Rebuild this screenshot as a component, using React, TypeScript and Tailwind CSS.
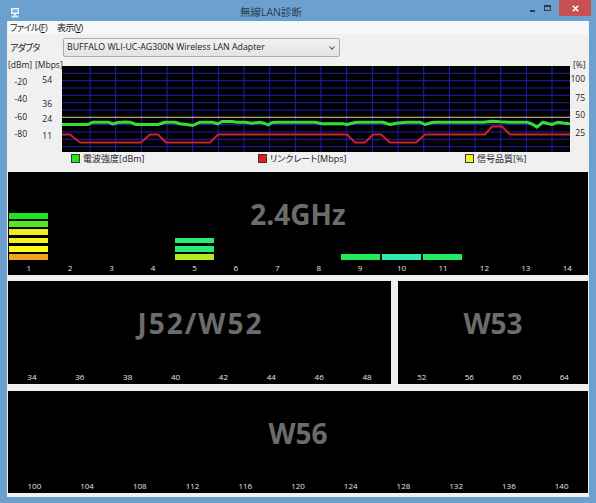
import React from 'react'

const UI = "font-['Open_Sans','Noto_Sans_CJK_JP',sans-serif] [font-feature-settings:'palt']"

// link rate trace, window coords -> chart coords (chart origin 62,66)
const RATE: [number, number][] = [
  [62, 134], [70, 134], [80, 142], [141, 142], [150, 134], [158, 134], [166, 142], [210, 142],
  [218, 134], [347, 134], [355, 142], [365, 142], [373, 134], [381, 134], [390, 142], [416, 142],
  [425, 134], [485, 134], [492, 126], [502, 126], [510, 134], [570, 134],
]

const SIGNAL: [number, number][] = [
  [62, 124], [88, 124], [93, 121.7], [108, 121.7], [113, 123.5], [118, 122], [125, 121.5], [130, 121.7],
  [136, 124], [158, 124], [165, 121.7], [175, 121.7], [180, 123.3], [190, 124.5], [193, 125], [200, 121.7],
  [212, 121.7], [218, 123.3], [222, 121], [232, 121], [237, 121.7], [245, 121.7], [252, 122.7], [260, 121.7],
  [265, 123], [268, 124.5], [272, 122], [278, 121.7], [315, 121.7], [322, 123.3], [343, 123.3], [347, 124],
  [355, 122], [360, 121.7], [383, 121.7], [390, 124], [398, 122.5], [407, 121.7], [420, 121.7], [425, 124],
  [432, 122], [437, 121.7], [483, 121.7], [492, 120.7], [500, 121.3], [510, 121.7], [527, 121.7], [533, 124],
  [537, 126.7], [543, 121.7], [548, 123], [552, 124], [558, 121.7], [563, 122.5], [570, 123.3],
]

const toPoints = (pts: [number, number][]) => pts.map(([x, y]) => `${x - 62},${y - 65.5}`).join(' ')

function TitleBar() {
  return (
    <div className="h-[21px] flex items-start relative">
      <svg width="8" height="10" viewBox="0 0 8 10" className="ml-[11px] mt-[8px]">
        <rect x="0.5" y="0.5" width="7" height="5" fill="#cfe4f7" stroke="#eef6fd" />
        <rect x="1.5" y="1.5" width="5" height="3" fill="#7fb2de" />
        <rect x="3" y="6" width="2" height="1.5" fill="#eef6fd" />
        <rect x="0.5" y="7.5" width="7" height="2" fill="#dceaf6" />
      </svg>
      <div className={`flex-1 text-center text-[10.5px] leading-none pt-[7px] text-[#2c3e50] ${UI}`}>無線LAN診断</div>
      <div className="flex items-start h-[16px] mr-[5px]">
        <div className="w-[18px] h-[16px] flex items-start justify-center pt-[10px]">
          <div className="w-[5px] h-[2px] bg-[#2a3b4c]" />
        </div>
        <div className="w-[12px] h-[16px] flex items-start justify-center pt-[5px]">
          <div className="w-[7px] h-[6px] border border-[#2a3b4c] border-t-2" />
        </div>
        <div className="w-[32px] h-[16px] ml-[6px] bg-[#c75050] flex items-center justify-center">
          <svg width="7" height="7" viewBox="0 0 7 7">
            <path d="M0.8 0.8 L6.2 6.2 M6.2 0.8 L0.8 6.2" stroke="#fff" strokeWidth="1.6" />
          </svg>
        </div>
      </div>
    </div>
  )
}

function MenuBar() {
  return (
    <div className={`h-[13px] bg-[#f6f7f8] flex items-center gap-[10px] pl-[2px] text-[9px] tracking-[-0.6px] leading-none text-[#1a1a1a] ${UI}`}>
      <span>ファイル(<span className="underline">F</span>)</span>
      <span>表示(<span className="underline">V</span>)</span>
    </div>
  )
}

function AdapterRow() {
  return (
    <div className={`h-[23px] flex items-start pt-[4px] leading-none text-[#1a1a1a] ${UI}`}>
      <div className="w-[55px] pl-[2px] pt-[5px] text-[9px] tracking-[-0.8px]">アダプタ</div>
      <div className="w-[277px] h-[19px] border border-[#adadad] rounded-[2px] bg-gradient-to-b from-[#f2f2f2] to-[#e3e3e3] flex items-center pl-[3px] pr-[4px]">
        <span className="flex-1 text-[8.8px]">BUFFALO WLI-UC-AG300N Wireless LAN Adapter</span>
        <svg width="6" height="4" viewBox="0 0 6 4">
          <path d="M0.5 0.5 L3 3.2 L5.5 0.5" fill="none" stroke="#555" strokeWidth="1.1" />
        </svg>
      </div>
    </div>
  )
}

function Chart() {
  const vx = Array.from({ length: 19 }, (_, i) => 28 + i * 25.67)
  const hy = Array.from({ length: 11 }, (_, i) => 7.33 * (i + 1))
  return (
    <svg width="508" height="86" viewBox="0 0 508 86" className="block bg-black">
      {vx.map((x) => (
        <line key={`v${x}`} x1={x} y1={0} x2={x} y2={86} stroke="#1f1fb4" strokeWidth="1" />
      ))}
      {hy.map((y, i) => (
        <line key={`h${y}`} x1={0} y1={y} x2={508} y2={y} stroke={i === 6 ? '#d9cba8' : '#1f1fb4'} strokeWidth="1" />
      ))}
      <polyline points={toPoints(RATE)} fill="none" stroke="#d02020" strokeWidth="2" />
      <polyline points={toPoints(SIGNAL)} fill="none" stroke="#35dc35" strokeWidth="3" strokeLinejoin="round" />
    </svg>
  )
}

function ChartSection() {
  const axis = "absolute text-[8.5px] leading-none text-[#1a1a1a] font-['Open_Sans',sans-serif]"
  return (
    <div className="h-[95px] flex">
      <div className="w-[54px] relative">
        <span className={`${axis} left-[0px] top-[4px]`}>[dBm]</span>
        <span className={`${axis} left-[27px] top-[4px]`}>[Mbps]</span>
        <span className={`${axis} right-[35px] top-[20.5px]`}>-20</span>
        <span className={`${axis} right-[35px] top-[38px]`}>-40</span>
        <span className={`${axis} right-[35px] top-[55.5px]`}>-60</span>
        <span className={`${axis} right-[35px] top-[73px]`}>-80</span>
        <span className={`${axis} right-[10px] top-[19px]`}>54</span>
        <span className={`${axis} right-[10px] top-[43px]`}>36</span>
        <span className={`${axis} right-[10px] top-[58px]`}>24</span>
        <span className={`${axis} right-[10px] top-[75px]`}>11</span>
      </div>
      <div className="pt-[9px]">
        <Chart />
      </div>
      <div className="flex-1 relative">
        <span className={`${axis} left-[3px] top-[3.5px]`}>[%]</span>
        <span className={`${axis} right-[3px] top-[18px]`}>100</span>
        <span className={`${axis} right-[3px] top-[36.5px]`}>75</span>
        <span className={`${axis} right-[3px] top-[54px]`}>50</span>
        <span className={`${axis} right-[3px] top-[72px]`}>25</span>
      </div>
    </div>
  )
}

function LegendItem({ color, label, width }: { color: string; label: string; width: string }) {
  return (
    <div className={`flex items-center gap-[3px] ${width}`}>
      <div className="w-[9px] h-[9px] border border-[#3a3a3a]" style={{ backgroundColor: color }} />
      <span className={`text-[9px] leading-none text-[#222] ${UI}`}>{label}</span>
    </div>
  )
}

function Legend() {
  return (
    <div className="h-[20px] flex items-start pt-[2px] pl-[63px]">
      <LegendItem color="#22e622" label="電波強度[dBm]" width="w-[187px]" />
      <LegendItem color="#e81818" label="リンクレート[Mbps]" width="w-[207px]" />
      <LegendItem color="#f4f41a" label="信号品質[%]" width="w-[100px]" />
    </div>
  )
}

const BARS: string[][] = [
  ['#20e220', '#58e622', '#ecec26', '#f4f41c', '#fcfc10', '#f2a21e'],
  [], [], [],
  ['#24ec74', '#24ec74', '#b2ea22'],
  [], [], [],
  ['#22ea5a'],
  ['#30e8b4'],
  ['#22ea64'],
  [], [], [],
]

function Labels({ items, cols }: { items: string[]; cols: string }) {
  return (
    <div className={`h-[15px] grid ${cols} items-center`}>
      {items.map((l) => (
        <span key={l} className="text-center text-[8px] leading-none text-[#e4e4e4] font-['Open_Sans',sans-serif]">
          {l}
        </span>
      ))}
    </div>
  )
}

function BandTitle({ children, className = '' }: { children: React.ReactNode; className?: string }) {
  return (
    <span className={`text-[28px] leading-none font-bold text-[#6c6c6c] font-['Open_Sans',sans-serif] ${className}`}>
      {children}
    </span>
  )
}

function Band24() {
  return (
    <div className="h-[103px] bg-black flex flex-col">
      <div className="flex-1 relative grid grid-cols-[repeat(14,minmax(0,1fr))] items-end">
        <div className="absolute inset-0 flex items-center justify-center pb-[4px]">
          <BandTitle>2.4GHz</BandTitle>
        </div>
        {BARS.map((bars, i) => (
          <div key={i} className="flex flex-col items-center gap-[2.6px]">
            {bars.map((c, j) => (
              <div key={j} className="w-[39px] h-[5.7px]" style={{ backgroundColor: c }} />
            ))}
          </div>
        ))}
      </div>
      <Labels items={['1', '2', '3', '4', '5', '6', '7', '8', '9', '10', '11', '12', '13', '14']} cols="grid-cols-[repeat(14,minmax(0,1fr))]" />
    </div>
  )
}

function Band({
  title,
  items,
  cols,
  className,
  titleClass,
}: {
  title: string
  items: string[]
  cols: string
  className: string
  titleClass?: string
}) {
  return (
    <div className={`bg-black flex flex-col ${className}`}>
      <div className="flex-1 flex items-center justify-center pb-[4px]">
        <BandTitle className={titleClass}>{title}</BandTitle>
      </div>
      <Labels items={items} cols={cols} />
    </div>
  )
}

export default function App() {
  return (
    <div className="w-[596px] h-[503px] bg-[#6ba0cf] flex flex-col overflow-hidden">
      <TitleBar />
      <div className="ml-[7px] mr-[7px] h-[476px] bg-[#f0f0f0] px-[1px] flex flex-col">
        <MenuBar />
        <AdapterRow />
        <ChartSection />
        <Legend />
        <Band24 />
        <div className="h-[103px] mt-[6px] flex gap-[7px]">
          <Band
            title="J52/W52"
            items={['34', '36', '38', '40', '42', '44', '46', '48']}
            cols="grid-cols-[repeat(8,minmax(0,1fr))]"
            className="w-[383px]"
            titleClass="tracking-[2px] pl-[2px]"
          />
          <Band
            title="W53"
            items={['52', '56', '60', '64']}
            cols="grid-cols-[repeat(4,minmax(0,1fr))]"
            className="flex-1"
          />
        </div>
        <Band
          title="W56"
          items={['100', '104', '108', '112', '116', '120', '124', '128', '132', '136', '140']}
          cols="grid-cols-[repeat(11,minmax(0,1fr))]"
          className="h-[102px] mt-[7px]"
        />
      </div>
    </div>
  )
}
